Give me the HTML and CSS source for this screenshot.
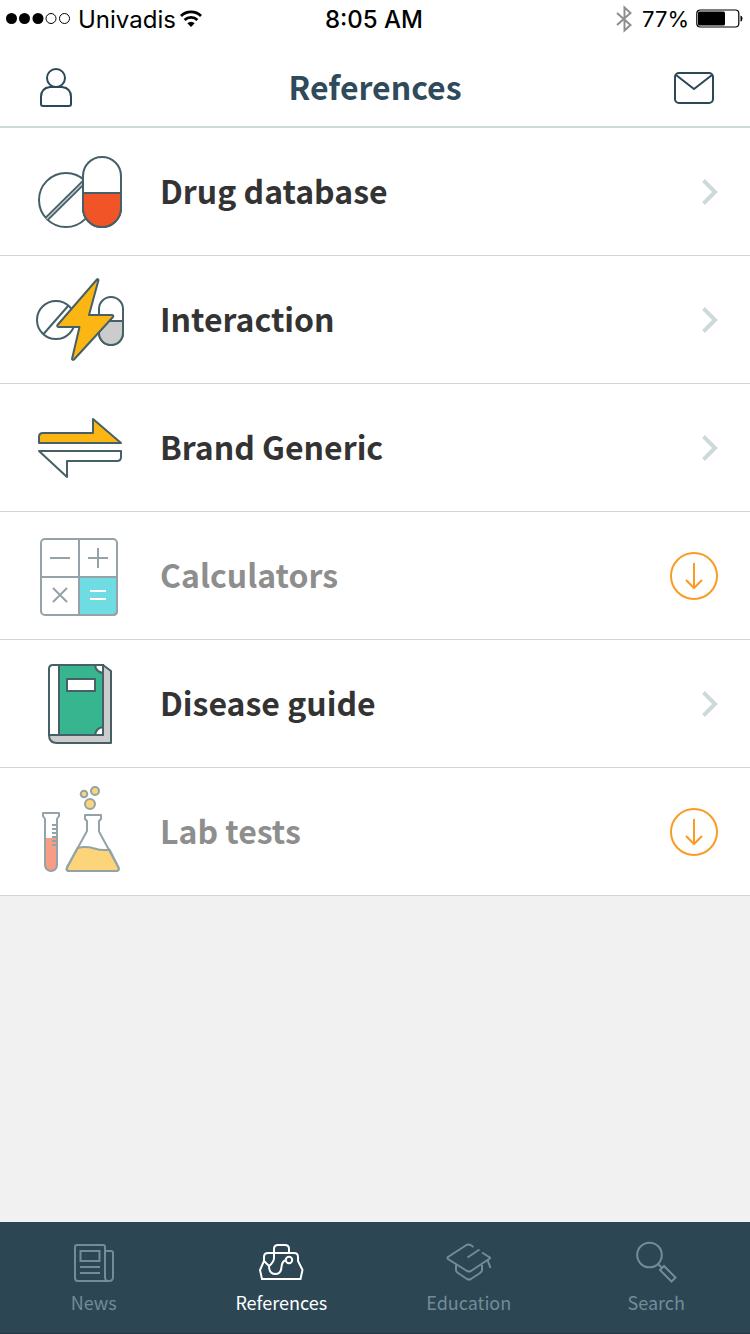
FILE: index.html
```html
<!DOCTYPE html>
<html lang="en">
<head>
    <meta charset="UTF-8" />
    <meta name="viewport" content="width=device-width, initial-scale=1.0" />
    <title>References</title>
    <link rel="stylesheet" href="styles.css">
</head>
<body>
    <div class="status-bar">
        <div class="status-left">
            <svg class="signal" width="66" height="14" viewBox="0 0 66 14">
                <g fill="#000">
                    <circle cx="6.500" cy="6.500" r="5.500" />
                    <circle cx="19.500" cy="6.500" r="5.500" />
                    <circle cx="33" cy="6.500" r="5.500" />
                </g>
                <g fill="none" stroke="#000">
                    <circle cx="46" cy="6.500" r="5" />
                    <circle cx="59.500" cy="6.500" r="5" />
                </g>
            </svg>
            <span>Univadis</span>
            <svg class="wifi" width="22" height="18" viewBox="0 0 22 18">
                <g fill="none" stroke="#000" stroke-width="2.800">
                    <path d="M1 6a14.300 14.300 0 0 1 20 0" />
                    <path d="M4.600 10a9.200 9.200 0 0 1 12.800 0" />
                </g>
                <path d="M11 17l-3.700-3.800a5.300 5.300 0 0 1 7.400 0z" />
            </svg>
        </div>
        <div class="status-time">8:05 AM</div>
        <div class="status-right">
            <svg class="bluetooth" width="18" height="28" viewBox="0 0 18 28">
                <path d="M2 8l13.500 12L9.500 25.500v-23l6 5.500L2 20" />
            </svg>
            <span>77%</span>
            <svg width="47" height="20" viewBox="0 0 47 20">
                <rect x="0.800" y="1" width="42" height="17" rx="3.500" fill="none" stroke="#000" stroke-width="1.200" />
                <rect x="2" y="2.500" width="27" height="14" rx="1.500" />
                <path d="M44.500 6.500q2 .5 2 3t-2 3z" />
            </svg>
        </div>
    </div>

    <header class="header">
        <button class="icon-button" aria-label="Profile">
            <svg width="48" height="48" viewBox="0 0 48 48">
                <circle cx="24" cy="14" r="9" />
                <path d="M18 23h12q9 1 9 10v7q0 2-2 2H11q-2 0-2-2v-7q0-9 9-10z" />
            </svg>
        </button>
        <h1>References</h1>
        <button class="icon-button" aria-label="Messages">
            <svg width="48" height="48" viewBox="0 0 48 48">
                <rect x="5" y="9" width="38" height="30" rx="4" />
                <path d="M6 11l18 14 18-14" />
            </svg>
        </button>
    </header>

    <main class="content">
        <ul class="reference-list">
            <li>
                <a class="reference-row" href="#drugs">
                    <svg class="reference-icon" viewBox="0 0 96 96">
                        <circle cx="34" cy="56" r="27" fill="#fff" />
                        <path d="M14.500 75L52 38" stroke-width="5" />
                        <path d="M14.500 75L52 38" stroke="#c5cacc" stroke-width="1.500" />
                        <rect x="51" y="13" width="38" height="70" rx="19" fill="#fff" />
                        <path d="M51 49h38v15a19 19 0 0 1-38 0z" fill="#f15427" />
                    </svg>
                    <span class="reference-name">Drug database</span>
                    <svg class="chevron" viewBox="0 0 16 26"><path d="M1.500 1.500L13 13 1.500 24.500" /></svg>
                </a>
            </li>
            <li>
                <a class="reference-row" href="#interaction">
                    <svg class="reference-icon" viewBox="0 0 96 96">
                        <circle cx="24" cy="48" r="19" />
                        <path d="M11.500 62l25-28.500" />
                        <rect x="67" y="25" width="24" height="48" rx="12" />
                        <path d="M67 49h24v12a12 12 0 0 1-24 0z" fill="#ccc" />
                        <path d="M64.500 8q1-2 2 0l-9.500 35h23q2 .5 1 2L42 87.500q-1.500 1-2-.5L47.500 55h-21q-2-.5-1-2z" fill="#fcb614" />
                    </svg>
                    <span class="reference-name">Interaction</span>
                    <svg class="chevron" viewBox="0 0 16 26"><path d="M1.500 1.500L13 13 1.500 24.500" /></svg>
                </a>
            </li>
            <li>
                <a class="reference-row" href="#brand">
                    <svg class="reference-icon" viewBox="0 0 96 96">
                        <path d="M7 43h82L61 19v14H11q-4 0-4 4z" fill="#fcb614" />
                        <path d="M7 51h82v6q0 4-4 4H35v16z" />
                    </svg>
                    <span class="reference-name">Brand Generic</span>
                    <svg class="chevron" viewBox="0 0 16 26"><path d="M1.500 1.500L13 13 1.500 24.500" /></svg>
                </a>
            </li>
            <li class="reference-row pending">
                <svg class="reference-icon" viewBox="0 0 96 96">
                    <path d="M47 49h38v34q0 4-4 4H47z" fill="#6fdbe3" />
                    <rect x="9" y="11" width="76" height="76" rx="4" />
                    <path d="M47 11v76M9 49h76M18 30h20M56 30h20M66 20v20M21 60l14 14M35 60L21 74" />
                    <path d="M58 63h16M58 71h16" stroke="#fff" />
                </svg>
                <span class="reference-name">Calculators</span>
                <button class="download" aria-label="Download Calculators">
                    <svg width="48" height="48" viewBox="0 0 48 48">
                        <circle cx="24" cy="24" r="23" />
                        <path d="M24 11v25M16 28l8 8 8-8" />
                    </svg>
                </button>
            </li>
            <li>
                <a class="reference-row" href="#diseases">
                    <svg class="reference-icon" viewBox="0 0 96 96">
                        <path d="M71 9l8 6v72H25q-8 0-8-8h54z" fill="#ccc" />
                        <path d="M71 79H17V13q0-4 4-4h50z" fill="#fff" />
                        <path d="M27 9h44v70H27z" fill="#37b58e" />
                        <path d="M63 9h8v8q-7-1-8-8zM63 79h8v-8q-7 1-8 8zM35 23h28v12H35z" fill="#fff" />
                    </svg>
                    <span class="reference-name">Disease guide</span>
                    <svg class="chevron" viewBox="0 0 16 26"><path d="M1.500 1.500L13 13 1.500 24.500" /></svg>
                </a>
            </li>
            <li class="reference-row pending">
                <svg class="reference-icon" viewBox="0 0 96 96">
                    <path d="M13 54h12v27a6 6 0 0 1-12 0z" fill="#f89d85" stroke="none" />
                    <path d="M11 29h16v3l-2 3v46a6 6 0 0 1-12 0V35l-2-3zM20 41h5M20 45h5M20 49h5M20 53h5M20 57h5M20 61h5" />
                    <path d="M45.500 64q8-2 17 .5 8 2.500 15 1l9 18q1 3.500-2 3.500h-47q-4 0-2.500-3.500z" fill="#fcd479" />
                    <path d="M53 31h16v4l-2 2v10.500l19.500 36q1 3.500-2 3.500h-47q-4 0-2.500-3.500L55 47V37l-2-2z" />
                    <g fill="#fcd479">
                        <circle cx="52" cy="10" r="3.300" />
                        <circle cx="63" cy="7" r="4" />
                        <circle cx="58" cy="20" r="5" />
                    </g>
                </svg>
                <span class="reference-name">Lab tests</span>
                <button class="download" aria-label="Download Lab tests">
                    <svg width="48" height="48" viewBox="0 0 48 48">
                        <circle cx="24" cy="24" r="23" />
                        <path d="M24 11v25M16 28l8 8 8-8" />
                    </svg>
                </button>
            </li>
        </ul>
    </main>

    <nav class="tab-bar">
        <a href="#news">
            <svg viewBox="0 0 48 48">
                <path d="M35 38V9q0-2-2-2H7Q5 7 5 9v31q0 3 3 3h31q4 0 4-4V15q0-2-2-2h-6v26q0 4 3 4" />
                <path d="M10.500 13h19v10h-19zM10 29h20M10 35h20" />
            </svg>
            <span>News</span>
        </a>
        <a href="#references" class="active">
            <svg viewBox="0 0 48 48">
                <path d="M5 41L3 32l4-9v-4q0-4 4-4h26q4 0 4 4v4l4.500 9-2 9z" />
                <path d="M32 15v-4q0-4-4-4h-7q-4 0-4 4v9q0 4-5 8l-5-5M12 28q0 8 6.500 8 5.500 0 6-7 .5-6 4.500-7" />
                <circle cx="32" cy="22" r="3.200" />
            </svg>
            <span>References</span>
        </a>
        <a href="#education">
            <svg viewBox="0 0 48 48">
                <path d="M28.500 9l-3-2q-2-1-4 0L3 19q-1 1 0 2l19 12q2 1 4 0l18-12q2-1 0-2l-7-4.500" />
                <path d="M22.500 19.500l12-8M42.500 22l3 8M11 27v5q0 2 2 3l9 6q2 1 4 0l9-6q2-1 2-3v-5" />
            </svg>
            <span>Education</span>
        </a>
        <a href="#search">
            <svg viewBox="0 0 48 48">
                <circle cx="17.500" cy="17" r="12.300" />
                <path d="M26 26l3.500 3.500M32 28l11.500 11.500-4 4L28 32z" />
            </svg>
            <span>Search</span>
        </a>
    </nav>
</body>
</html>
```
FILE: styles.css
```css
/* Main Styles */
* {
    box-sizing: border-box;
}

body {
    margin: 0;
    min-height: 100vh;
    display: flex;
    flex-direction: column;
    background-color: #f1f1f1;
    color: #333;
    font-family: 'Noto Sans CJK SC', 'Open Sans', sans-serif;
}

button {
    padding: 0;
    border: none;
    background: none;
    cursor: pointer;
}

svg {
    display: block;
    flex: none;
}

/* Status bar */
.status-bar {
    display: grid;
    grid-template-columns: 1fr auto 1fr;
    align-items: center;
    height: 40px;
    padding: 0 7px 2px 5px;
    background-color: #fff;
    color: #000;
    font-family: Inter, 'Liberation Sans', sans-serif;
    font-size: 24px;
}

.status-left,
.status-right {
    display: flex;
    align-items: center;
    gap: 7px;
}

.wifi {
    margin-left: -3px;
}

.status-right {
    justify-content: flex-end;
    font-size: 22px;
}

.bluetooth {
    margin-right: 2px;
    fill: none;
    stroke: #8e8e8e;
    stroke-width: 2;
}

.status-time {
    font-weight: 500;
}

/* Header */
.header {
    display: flex;
    align-items: center;
    justify-content: space-between;
    height: 88px;
    padding: 10px 32px 0;
    background-color: #fff;
    border-bottom: 2px solid #cdd8da;
}

.header h1 {
    margin: 0;
    padding-bottom: 4px;
    font-size: 32px;
    font-weight: 700;
    color: #2f4b5b;
}

.icon-button svg {
    fill: none;
    stroke: #2c4756;
    stroke-width: 2;
}

/* Reference list */
.content {
    flex: 1;
}

.reference-list {
    margin: 0;
    padding: 0;
    list-style: none;
}

.reference-row {
    display: flex;
    align-items: center;
    height: 128px;
    padding: 0 32px;
    background-color: #fff;
    border-bottom: 1px solid #cdd6d9;
    color: #333;
    text-decoration: none;
}

.reference-icon {
    width: 96px;
    height: 96px;
    fill: none;
    stroke: #466067;
    stroke-width: 2;
    stroke-linejoin: round;
}

.reference-name {
    flex: 1;
    margin-left: 32px;
    padding-bottom: 4px;
    font-size: 32px;
    font-weight: 700;
}

.pending .reference-name {
    color: #8e8e8e;
}

.pending .reference-icon {
    stroke: #93a3a7;
}

.chevron {
    width: 16px;
    height: 26px;
    fill: none;
    stroke: #cfd8dc;
    stroke-width: 4;
}

.download svg {
    fill: none;
    stroke: #fb9b23;
    stroke-width: 2;
}

/* Tab bar */
.tab-bar {
    display: flex;
    height: 112px;
    background-color: #2c4654;
    border-bottom: 1px solid #223945;
}

.tab-bar a {
    flex: 1;
    display: flex;
    flex-direction: column;
    align-items: center;
    padding-top: 16px;
    color: #738c98;
    font-size: 18px;
    line-height: 24px;
    text-decoration: none;
}

.tab-bar a.active {
    color: #fff;
}

.tab-bar svg {
    width: 48px;
    height: 48px;
    margin-bottom: 4px;
    fill: none;
    stroke: currentColor;
    stroke-width: 2;
}
```
